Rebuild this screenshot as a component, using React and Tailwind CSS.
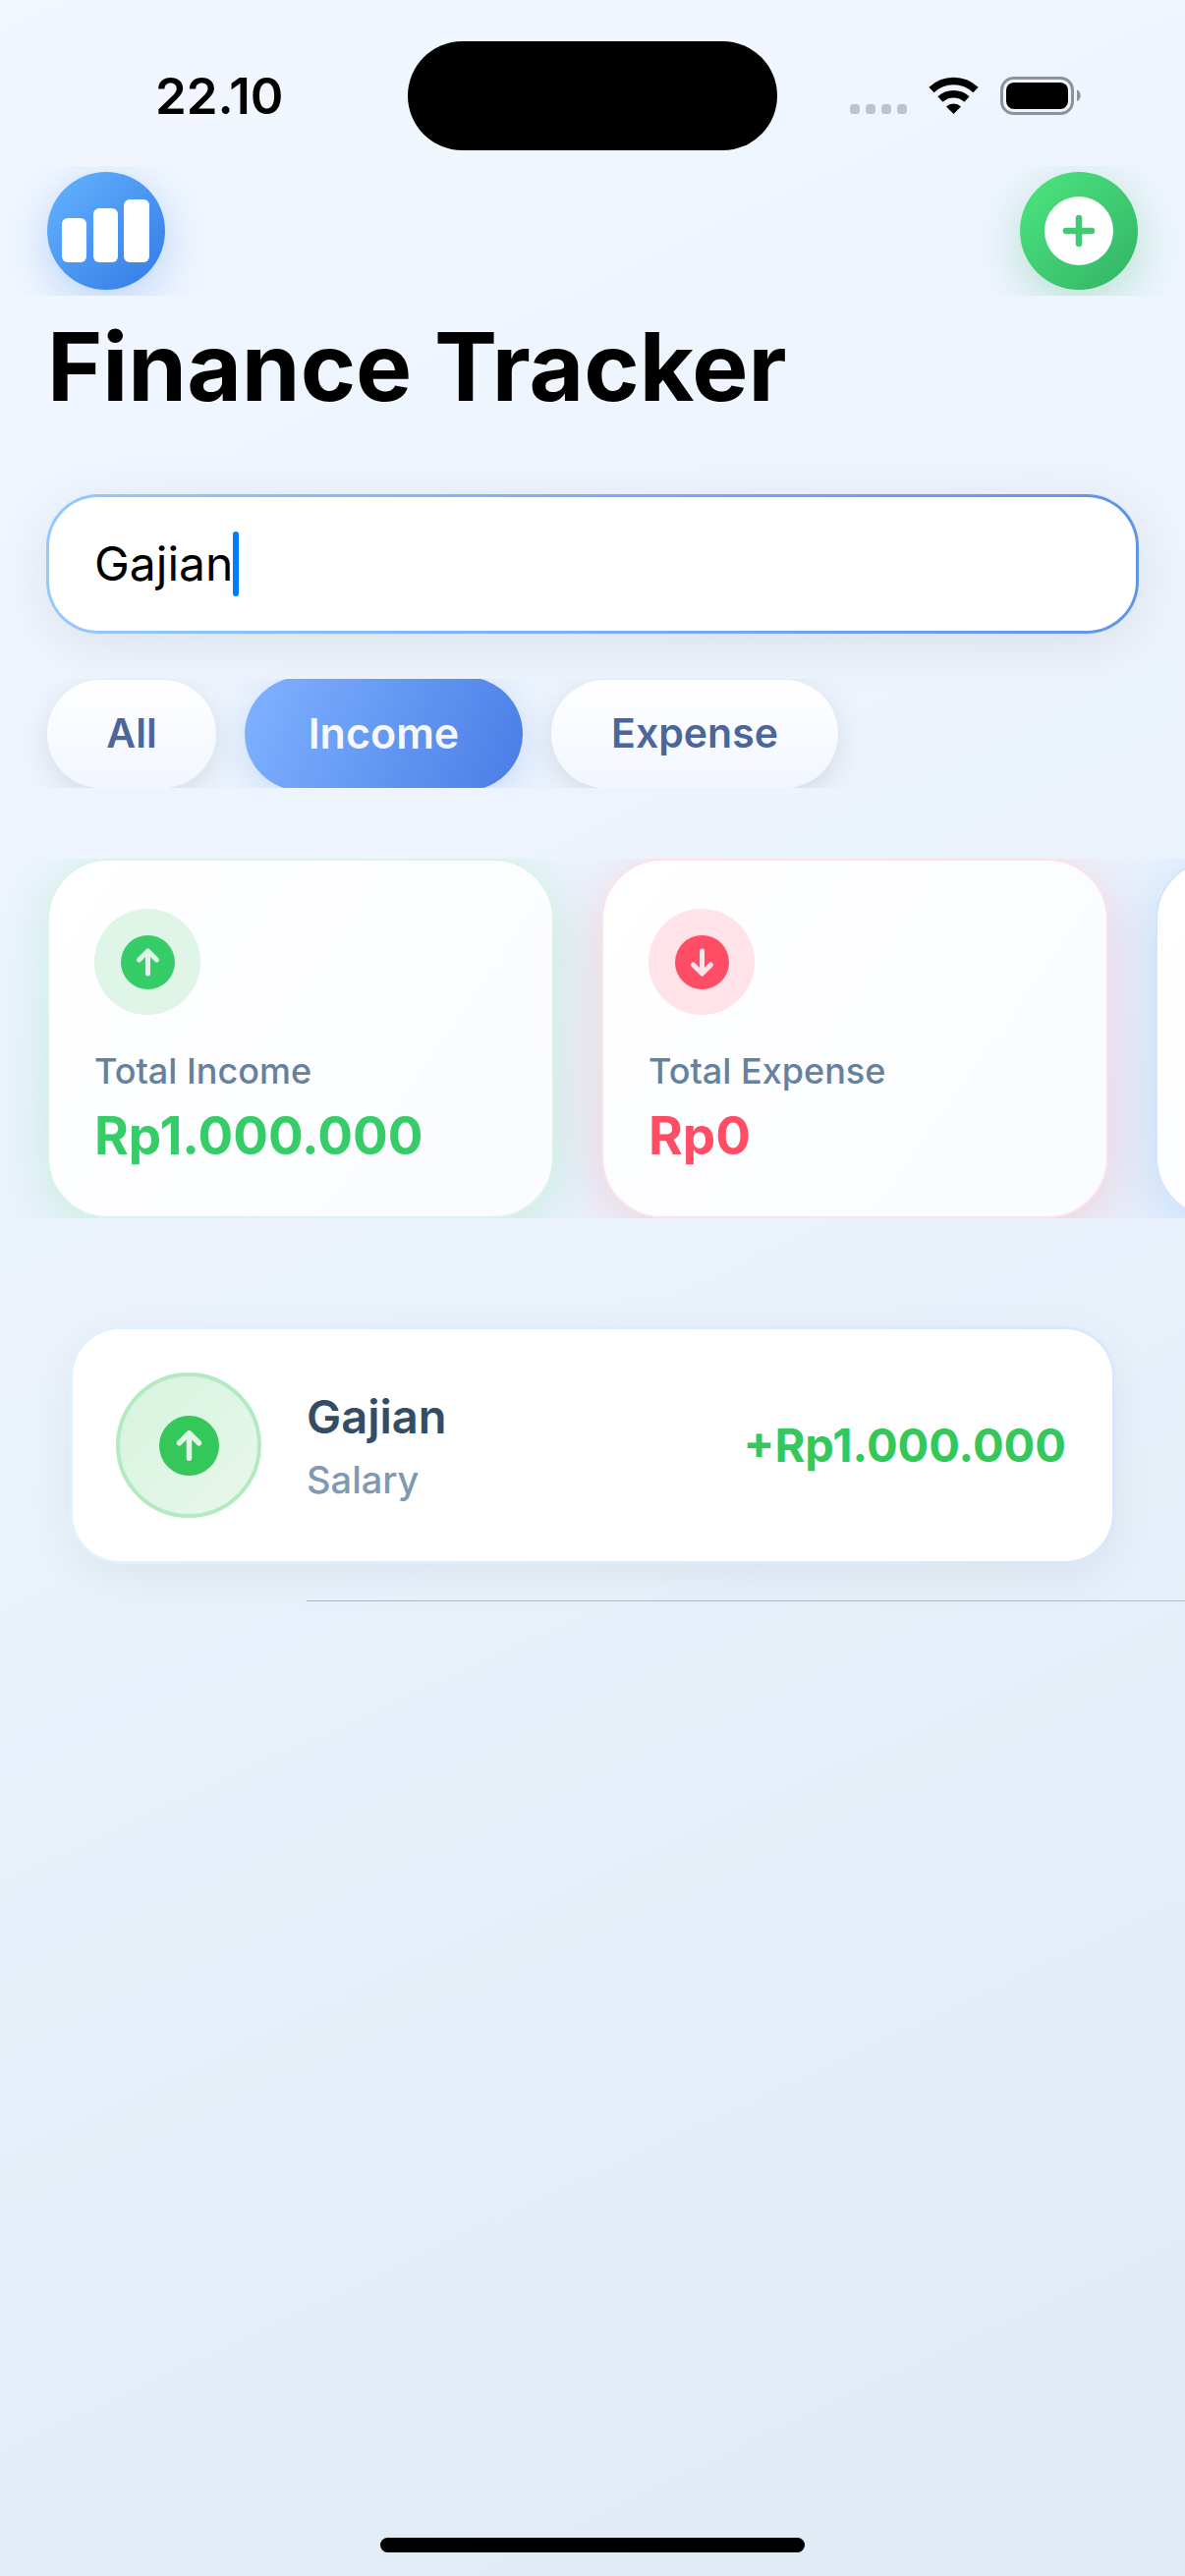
import React from "react";

function StatusBar() {
  return (
    <div className="grid grid-cols-3 items-center pt-[42px]">
      <div className="pl-[158px] text-[51px] leading-[60px] font-semibold">22.10</div>
      <div className="mx-auto h-[111px] w-[376px] rounded-full bg-black" />
      <div className="flex items-center justify-end pr-[105px]">
        <svg className="h-[40px] w-[236px]" viewBox="865 78 236 40" aria-hidden="true">
          <g fill="#bfc3cb">
            <rect x="865" y="106" width="10" height="10" rx="3.5" />
            <rect x="881" y="106" width="10" height="10" rx="3.5" />
            <rect x="897" y="106" width="10" height="10" rx="3.5" />
            <rect x="913" y="106" width="10" height="10" rx="3.5" />
          </g>
          <g fill="none" stroke="#000" strokeWidth="7.6">
            <path d="M948 91.5A32.5 32.5 0 0 1 993 91.5" />
            <path d="M957 101A20 20 0 0 1 984 101" />
          </g>
          <path d="M970.500 116L963 108.500A11 11 0 0 1 978 108.500Z" />
          <rect x="1019.500" y="79.500" width="72" height="36" rx="12" fill="none" stroke="#8f9398" strokeWidth="3" />
          <rect x="1024" y="84" width="63" height="27" rx="8" />
          <path d="M1096 91.500c5 1.500 5 10 0 11.500z" fill="#8f9398" />
        </svg>
      </div>
    </div>
  );
}

function Arrow({ down, className }) {
  return (
    <svg viewBox="0 0 55 55" className={className} aria-hidden="true">
      <g transform={down ? "rotate(180 27.500 27.500)" : undefined}>
        <circle cx="27.500" cy="27.500" r="27.500" fill="currentColor" />
        <path
          d="M27.500 39V17M18.500 25L27.500 16L36.500 25"
          fill="none"
          strokeWidth="5"
          strokeLinecap="round"
          strokeLinejoin="round"
          className={down ? "stroke-[#ffe3e8]" : "stroke-[#dff5e7]"}
        />
      </g>
    </svg>
  );
}

function SummaryCard({ className, children }) {
  return (
    <section className={`h-[366px] w-[516px] shrink-0 rounded-[62px] border-2 bg-linear-[125deg] from-white to-[#fafcff] px-[46px] pt-[49px] ${className}`}>
      {children}
    </section>
  );
}

function Summary({ label, amount, down, badge, tone }) {
  return (
    <>
      <div className={`flex h-[108px] w-[108px] items-center justify-center rounded-full ${badge}`}>
        <Arrow down={down} className={`h-[55px] w-[55px] ${tone}`} />
      </div>
      <p className="mt-[33px] text-[36px] leading-[48px] font-medium text-[#66819c]">{label}</p>
      <p className={`mt-[10px] text-[53px] leading-[64px] font-bold ${tone}`}>{amount}</p>
    </>
  );
}

export default function App() {
  return (
    <main className="flex min-h-screen flex-col overflow-hidden bg-linear-[155deg] from-[#f2f7ff] via-[#eaf2fc] to-[#e0eaf4] font-[Inter,sans-serif] text-black">
      <StatusBar />

      <header>
        <div className="mt-[16px] flex justify-between overflow-hidden px-[48px] py-[6px]">
          <button aria-label="Statistics" className="h-[120px] w-[120px] rounded-full bg-linear-to-br from-[#66b3ff] to-[#337ae5] shadow-[0_12px_48px_rgba(51,128,230,0.3)]">
            <svg viewBox="0 0 120 120" fill="#fff" aria-hidden="true">
              <rect x="15" y="47" width="25" height="45" rx="6" />
              <rect x="47" y="37" width="25" height="55" rx="6" />
              <rect x="78" y="28" width="26" height="64" rx="6" />
            </svg>
          </button>
          <button aria-label="Add transaction" className="h-[120px] w-[120px] rounded-full bg-linear-to-br from-[#4de680] to-[#33b366] shadow-[0_12px_48px_rgba(51,179,102,0.3)]">
            <svg viewBox="0 0 120 120" aria-hidden="true">
              <circle cx="60" cy="60" r="35" fill="#fff" />
              <path d="M47 60H73M60 47V73" stroke="#40cb73" strokeWidth="6.500" strokeLinecap="round" />
            </svg>
          </button>
        </div>
        <h1 className="px-[48px] pt-[10px] text-[96px] leading-[124px] font-bold">Finance Tracker</h1>
      </header>

      <div className="mx-[47px] mt-[68px] rounded-[53px] bg-linear-to-r from-[#94c9ff] to-[#5f95e8] p-[3px] shadow-[0_12px_56px_rgba(0,0,0,0.08)]">
        <div className="flex h-[136px] items-center rounded-[50px] bg-white px-[46px]">
          <input aria-label="Search transactions" defaultValue="Gajian" className="[field-sizing:content] text-[48px] leading-[60px] caret-[#007aff] outline-none" />
          <span className="h-[66px] w-[6px] rounded-full bg-[#007aff]" />
        </div>
      </div>

      <nav aria-label="Filter" className="mt-[46px] flex h-[111px] items-center gap-[29px] overflow-hidden px-[48px] font-semibold">
        <button className="h-[110px] w-[172px] shrink-0 rounded-[55px] bg-linear-to-b from-white to-[#f2f6ff] text-[41px] text-[#4d6699] shadow-[0_9px_32px_rgba(0,0,0,0.1)]">All</button>
        <button aria-pressed="true" className="h-[116px] w-[283px] shrink-0 rounded-[58px] bg-linear-[112deg] from-[#80b3ff] to-[#4a7de6] text-[43px] text-white/95 shadow-[0_9px_40px_rgba(77,140,240,0.25)]">Income</button>
        <button className="h-[110px] w-[292px] shrink-0 rounded-[55px] bg-linear-to-b from-white to-[#f2f6ff] text-[41px] text-[#4d6699] shadow-[0_9px_32px_rgba(0,0,0,0.1)]">Expense</button>
      </nav>

      <div className="mt-[72px] flex gap-[48px] overflow-hidden px-[48px]">
        <SummaryCard className="border-[#d9f4e4] shadow-[0_12px_60px_rgba(51,204,102,0.2)]">
          <Summary label="Total Income" amount="Rp1.000.000" tone="text-[#36cc68]" badge="bg-[#dff5e7]" />
        </SummaryCard>
        <SummaryCard className="border-[#fde1e7] shadow-[0_12px_60px_rgba(255,77,102,0.2)]">
          <Summary down label="Total Expense" amount="Rp0" tone="text-[#ff4d66]" badge="bg-[#ffe3e8]" />
        </SummaryCard>
        <SummaryCard className="border-[#d3e4ff] shadow-[0_12px_60px_rgba(77,153,255,0.25)]" />
      </div>

      <ul className="mt-[110px]">
        <li>
          <article className="mx-[71px] rounded-[51px] bg-linear-to-r from-[#e3f0ff] to-[#d9e6fd] p-[3px] shadow-[0_12px_48px_rgba(0,0,0,0.06)]">
            <div className="flex h-[236px] items-center rounded-[48px] bg-white pr-[47px] pl-[44px]">
              <div className="flex h-[148px] w-[148px] items-center justify-center rounded-full border-4 border-[#b3eac3] bg-linear-to-br from-[#d6f3de] to-[#e8f8ec]">
                <Arrow className="h-[61px] w-[61px] text-[#34c759]" />
              </div>
              <div className="ml-[46px] flex-1">
                <h2 className="text-[47px] leading-[60px] font-semibold text-[#334d66]">Gajian</h2>
                <p className="mt-[10px] text-[38px] leading-[48px] font-medium text-[#8099b3]">Salary</p>
              </div>
              <p className="text-[47px] leading-[60px] font-bold text-[#34c759]">+Rp1.000.000</p>
            </div>
          </article>
          <hr className="mt-[37px] ml-[312px] border-[#adb8c4]" />
        </li>
      </ul>

      <div className="mx-auto mt-auto mb-[24px] h-[15px] w-[432px] rounded-full bg-black" />
    </main>
  );
}
